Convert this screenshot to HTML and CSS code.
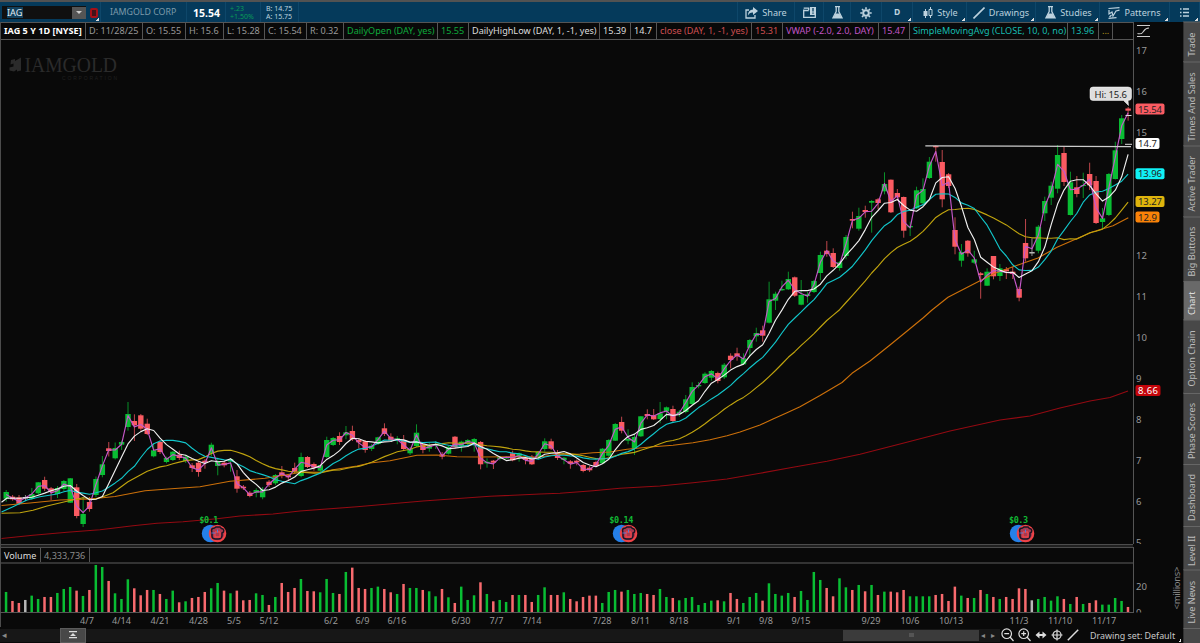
FILE: index.html
```html
<!DOCTYPE html>
<html lang="en">

<head>
    <meta charset="UTF-8">
    <meta name="viewport" content="width=device-width, initial-scale=1.0">
    <title>IAG chart</title>
    <link rel="stylesheet" href="styles.css">
</head>

<body>
    <header class="toolbar">
        <div class="symbol"><span class="ticker">IAG</span><span class="drop"></span></div>
        <div class="flag corner"><i></i></div>
        <div class="company">IAMGOLD CORP</div>
        <div class="last">15.54</div>
        <div class="pair up"><span>+.23</span><span>+1.50%</span></div>
        <div class="pair quote"><span>B: 14.75</span><span>A: 15.75</span></div>
        <div class="spacer"></div>
        <div class="tool share">
            <svg width="13" height="12" viewBox="0 0 13 12"><path d="M4 3H1v8h9V8" fill="none" stroke="currentColor" stroke-width="1.3"/><path d="M8 0l5 4-5 4V5.5C5.5 5.3 4 6.500 3 8.500 3 5 5 2.700 8 2.500z" fill="currentColor"/></svg>
            <span>Share</span>
        </div>
        <div class="tool cal">
            <svg width="13" height="11" viewBox="0 0 13 11"><path d="M.7 2.500V10.300h11.600V5M.7 3.500h5M.7 1.200h5v2" fill="none" stroke="currentColor" stroke-width="1.3"/><path d="M7 0h6v8H7z" fill="currentColor"/><path d="M10 1v3.500M10 5.500v1.300" stroke="#053a5b" stroke-width="1.300"/></svg>
        </div>
        <div class="tool flask"><svg width="11" height="13" viewBox="0 0 11 13"><use href="#flask"/></svg></div>
        <div class="tool gear">
            <svg width="12" height="12" viewBox="0 0 12 12"><circle cx="6" cy="6" r="2.800" fill="none" stroke="currentColor" stroke-width="2"/><path d="M6 .3v2M6 9.700v2M.3 6h2M9.700 6h2M2 2l1.400 1.400M8.600 8.600L10 10M2 10l1.400-1.400M8.600 3.400L10 2" stroke="currentColor" stroke-width="1.600"/></svg>
        </div>
        <div class="tool agg corner"><b>D</b></div>
        <div class="tool style corner">
            <svg width="10" height="12" viewBox="0 0 10 12"><path d="M2.500 2v9M7.500 0v2.500M7.500 8.500V11" stroke="currentColor"/><path d="M.5 4h4v5h-4z" fill="currentColor"/><path d="M6 2.500h3v6H6z" fill="none" stroke="currentColor"/></svg>
            <span>Style</span>
        </div>
        <div class="tool draw corner">
            <svg width="12" height="12" viewBox="0 0 12 12"><path d="M.5 11.500L11.500.5" stroke="currentColor" stroke-width="1.600"/></svg>
            <span>Drawings</span>
        </div>
        <div class="tool studies corner">
            <svg width="11" height="13" viewBox="0 0 11 13"><g id="flask"><path d="M3 .7h5M4.200 1v4.500L1 11.800h9L6.800 5.500V1" fill="none" stroke="currentColor" stroke-width="1.300"/><path d="M3.500 7.500h4l2.200 4.500H1.300z" fill="currentColor"/></g></svg>
            <span>Studies</span>
        </div>
        <div class="tool patterns corner">
            <svg width="12" height="12" viewBox="0 0 12 12"><path d="M.5 1.500L11.500.7M.5 11.300l8-.6M1 3v4l3-2 1 4 3-5 3.500-.8M1.500 10l2-2" fill="none" stroke="currentColor" stroke-width="1.200"/></svg>
            <span>Patterns</span>
        </div>
        <div class="tool list corner">
            <svg width="9" height="9" viewBox="0 0 9 9"><path d="M0 1h1.500M3 1h6M0 4.500h1.500M3 4.500h6M0 8h1.500M3 8h6" stroke="currentColor" stroke-width="1.300"/></svg>
        </div>
    </header>

    <main class="workspace">
        <section class="chart">
            <div class="legend" id="legend"></div>
            <svg class="plot" id="plot" viewBox="0 40 1133 504">
                <g class="logo">
                    <path d="M11 60l4-1v2l6-3.500v13l-4 1v-2l-3 2-4.500-1v-3l4-1v-3l-3 1z"/>
                    <text class="brand" x="24.500" y="71.500" textLength="92.500" lengthAdjust="spacingAndGlyphs">IAMGOLD</text>
                    <text class="sub" x="62" y="79.500" textLength="55">CORPORATION</text>
                </g>
            </svg>
            <div class="volume-head"><span>Volume</span><span class="amount">4,333,736</span></div>
            <svg class="volume" id="volume" viewBox="0 564 1133 49"></svg>
            <svg class="dates" id="dates" viewBox="0 613 1133 14"></svg>
        </section>
        <svg class="axis" id="axis" viewBox="1133 22 50 605">
            <path class="fit" d="M1137 25.500h13M1137 36.500h13M1137.500 33.500c8 2 4-5.500 11.500-5.500"/>
        </svg>
        <nav class="tabs">
            <span class="t1">Trade</span>
            <span class="t2">Times And Sales</span>
            <span class="t3">Active Trader</span>
            <span class="t4">Big Buttons</span>
            <span class="t5 active">Chart</span>
            <span class="t6">Option Chain</span>
            <span class="t7">Phase Scores</span>
            <span class="t8">Dashboard</span>
            <span class="t9">Level II</span>
            <span class="t10">Live News</span>
            <span class="t11"></span>
        </nav>
        <footer class="bottom">
            <div class="track">
                <span class="arrow">◂</span>
                <span class="expand"><svg width="8" height="8" viewBox="0 0 8 8"><path d="M0 0h8v1.300H0zM4 2l3 3H1zM0 6h8v1.300H0z" fill="#ddd"/></svg></span>
                <span class="thumb"><i></i></span>
                <span class="arrows"><b>◂</b><b>▸</b></span>
            </div>
            <div class="zoomers">
                <svg width="13" height="14" viewBox="0 0 13 14"><g id="lens"><circle cx="5.700" cy="5.700" r="4.800"/><path d="M9 9l3.500 4M3.300 5.700h4.800"/></g></svg>
                <svg width="13" height="14" viewBox="0 0 13 14"><use href="#lens"/><path d="M5.700 3.300v4.800"/></svg>
                <svg width="12" height="12" viewBox="0 0 12 12"><path d="M3 6h6" stroke-width="2"/><path d="M4.500 2.500v7L.5 6zM7.500 2.500v7l4-3.500z" fill="#ddd" stroke="none"/></svg>
                <svg width="12" height="12" viewBox="0 0 12 12"><circle cx="6" cy="6" r="4"/><path d="M6 .5v11M.5 6h11"/></svg>
                <svg width="12" height="12" viewBox="0 0 12 12"><path d="M.8 11.200L11.200.8" stroke-width="1.500"/></svg>
            </div>
            <div class="set corner">Drawing set: Default</div>
        </footer>
    </main>

    <script src="chart.js"></script>
</body>

</html>
```
FILE: styles.css
```css
* {
    box-sizing: border-box;
}

body {
    margin: 0;
    width: 1200px;
    height: 643px;
    overflow: hidden;
    background: #090909;
    color: #ccc;
    font: 9.100px/1 "Noto Sans", "Open Sans", sans-serif;
}

svg {
    display: block;
    flex: none;
}

/* toolbar */
.toolbar {
    display: flex;
    height: 22px;
    border-top: 2px solid #525252;
    background: #053a5b;
    color: #bdd2de;
    white-space: nowrap;
}

.toolbar > div {
    display: flex;
    align-items: center;
    flex: none;
    height: 20px;
    padding-top: 1px;
    border-right: 1px solid #0e476a;
}

.toolbar > .symbol {
    width: 84px;
    height: 13px;
    margin: 4px 0 0 2px;
    padding: 0;
    background: #101010;
    border: 0;
}

.ticker {
    width: 16px;
    margin-left: 5px;
    background: #12405c;
    color: #e4edf2;
    line-height: 11px;
}

.drop {
    display: flex;
    justify-content: center;
    align-items: center;
    width: 14px;
    height: 12px;
    margin-left: auto;
    background: #555;
}

.drop::after {
    content: "";
    border: 3.500px solid transparent;
    border-top-color: #ccc;
    border-bottom: 0;
}

.toolbar > .flag {
    width: 15px;
    padding-left: 4px;
}

.flag i {
    width: 8px;
    height: 10px;
    border: 2.500px solid #a51018;
    border-radius: 2px;
    background: #43121a;
}

.toolbar > .company {
    width: 86px;
    padding-left: 9px;
    color: #7e9aaa;
    font-size: 8.800px;
}

.toolbar > .last {
    width: 39px;
    padding-left: 6px;
    padding-top: 2px;
    color: #fff;
    font-size: 10.500px;
    font-weight: bold;
}

.toolbar > .pair {
    flex-direction: column;
    align-items: flex-start;
    justify-content: center;
    width: 35px;
    padding-left: 4px;
    font-size: 7px;
    line-height: 8px;
}

.toolbar > .up {
    color: #0a9c58;
}

.toolbar > .quote {
    width: 38px;
    padding-left: 5px;
}

.toolbar > .spacer {
    flex: 1;
}

.toolbar > .tool {
    justify-content: center;
    gap: 4px;
}

.toolbar > .share { width: 57px; }
.toolbar > .cal { width: 29px; }
.toolbar > .flask { width: 27px; }
.toolbar > .gear { width: 31px; }
.toolbar > .agg { width: 31px; }
.toolbar > .style { width: 54px; }
.toolbar > .draw { width: 69px; }
.toolbar > .studies { width: 64px; }
.toolbar > .patterns { width: 70px; }
.toolbar > .list { width: 30px; }

.toolbar > .style,
.toolbar > .studies {
    padding-left: 2px;
}

.agg b {
    font-size: 8.500px;
}

/* small white triangle that marks a drop-down */
.corner {
    background: linear-gradient(135deg, transparent 50%, #ddd 50%) right 1px bottom 1px / 3px 3px no-repeat;
}

/* workspace */
.workspace {
    display: grid;
    grid-template-columns: 1133px 50px 17px;
    grid-template-rows: 605px 16px;
    height: 621px;
}

.chart {
    border-left: 1px solid #4c4c4c;
    display: flex;
    flex-direction: column;
}

.legend {
    display: flex;
    height: 18px;
    border: 1px solid #555;
    border-width: 1px 0;
    white-space: nowrap;
}

.legend span {
    flex: none;
    padding-left: 3px;
    border-right: 1px solid #555;
    line-height: 15px;
}

.plot {
    width: 1133px;
    height: 504px;
    margin-left: -1px;
}

.volume-head {
    display: flex;
    height: 20px;
    border-top: 1px solid #4c4c4c;
    border-bottom: 2px solid #333;
    background: linear-gradient(#202020 2px, #4c4c4c 2px, #4c4c4c 3px, transparent 3px);
    padding-top: 3px;
}

.volume-head span {
    width: 40px;
    padding-left: 3px;
    border-right: 1px solid #555;
    line-height: 15px;
    color: #ddd;
}

.volume-head .amount {
    width: 49px;
    color: #8b8b8b;
}

.volume {
    width: 1133px;
    height: 49px;
    margin-left: -1px;
}

.logo path,
.logo text {
    fill: #2b2b2b;
}

.brand {
    font: 20px "Liberation Serif", serif;
}

.logo .sub {
    fill: #202020;
    font: 5px "Liberation Sans", sans-serif;
}

.line {
    fill: none;
    stroke-width: 1.150;
    stroke-linejoin: round;
}

.g { fill: #09bd33; stroke: #09bd33; }
.r { fill: #fb5b62; stroke: #fb5b62; }
.w { fill: #b8b8b8; stroke: #b8b8b8; }

.wick {
    stroke-width: 1;
    opacity: .75;
}

.body,
.bar {
    stroke: none;
}

.bar.r {
    fill: #f86a6e;
}

.dividend {
    fill: #11b834;
    font: bold 8.500px "DejaVu Sans Mono", monospace;
}

.bubble {
    fill: #dedede;
    stroke: #fff;
    stroke-width: .5;
}

.hi {
    fill: #222;
    font-size: 9.500px;
}

/* axis */
.axis {
    width: 50px;
    height: 605px;
    font-size: 9.500px;
    fill: #999;
}

.fit {
    fill: none;
    stroke: #ccc;
    stroke-width: 1.200;
}

.frame {
    fill: none;
    stroke: #555;
}

.dates {
    width: 1133px;
    height: 14px;
    margin-left: -1px;
    font-size: 9.100px;
    fill: #999;
    text-anchor: middle;
}

.millions {
    fill: #888;
    text-anchor: middle;
}

/* side tabs */
.tabs {
    grid-column: 3;
    grid-row: 1 / 3;
    background: #484848;
}

.tabs span {
    display: flex;
    align-items: center;
    justify-content: center;
    width: 17px;
    padding-top: 0;
    writing-mode: vertical-rl;
    transform: rotate(180deg);
    border-bottom: 1px solid #666;
    border-right: 1px solid #303030;
    color: #bbb;
    white-space: nowrap;
}

/* the tabs are turned upside down, so this moves each label down */
.tabs span:not(:empty) {
    padding-bottom: 4px;
}

.t1 { height: 39.500px; }
.t2 { height: 84.500px; }
.t3 { height: 70.500px; }
.t4 { height: 64.500px; }
.t5 { height: 39px; }
.t6 { height: 72.500px; }
.t7 { height: 71px; }
.t8 { height: 62px; }
.t9 { height: 44px; }
.t10 { height: 58.500px; }
.t11 { height: 15px; }

.tabs .active {
    background: #696969;
    color: #ddd;
}

/* bottom bar */
.bottom {
    grid-column: 1 / 3;
    grid-row: 2;
    display: flex;
    align-items: center;
}

.track {
    display: flex;
    align-items: center;
    width: 1000px;
    height: 13px;
    background: #171717;
    color: #888;
    font: 9px "DejaVu Sans", sans-serif;
}

.arrow {
    width: 60px;
    padding-left: 2px;
}

.expand {
    display: flex;
    align-items: center;
    justify-content: center;
    width: 26px;
    height: 15px;
    background: #484848;
    border: 1px solid #5b5b5b;
}

.thumb {
    display: flex;
    align-items: center;
    justify-content: center;
    width: 136px;
    height: 11px;
    margin-left: 757px;
    background: #3b3b3b;
}

.thumb i {
    width: 5px;
    height: 4px;
    background: #555;
}

.arrows {
    display: flex;
    gap: 6px;
    padding-left: 2px;
    font-size: 8px;
}

.zoomers {
    display: flex;
    align-items: center;
    gap: 4px;
    width: 90px;
    padding-left: 1px;
    fill: none;
    stroke: #ddd;
    stroke-width: 1.200;
}

.set {
    width: 92px;
    font-size: 8.900px;
    line-height: 15px;
    white-space: nowrap;
    color: #c8c8c8;
}
```
FILE: chart.js
```js
// colour, high, body top, body bottom, low, volume
const rows = `
g 490 492 498.7 501.7 61|r 495 496.7 499.3 500.7 34|r 495 497.3 503.7 505 28|w 495 497 498.5 501 37
g 488 494 498.7 500 50|g 482 482.3 493.3 495 40|r 476.7 480 488.7 491 46|r 487 488.3 491.7 500 46
g 486 488 494 498 58|g 480 481 489 491 70|g 478 478.3 502.7 503 76|r 484 487.3 516 518.3 65
g 497 514 524 527 49|r 497 502 509 511.7 67|g 476.5 479 495 497 142|g 456 464.3 475 477.3 136
r 442 448.3 451 456.5 94|g 442.5 448 458.3 459.5 57|g 440.7 442 444.7 450 40|g 402 414 427 430.7 99
r 414.3 421 425.3 441 72|r 414 415.3 428.7 430.7 51|r 418.7 423.7 434 435 67|g 443.3 450.3 456.3 457.3 67
r 440.7 442 452 454 55|g 456.7 458 462 463.3 40|g 451 451.7 460 461 65|r 450.7 454.7 458 460 30
g 454.7 456.7 461 463 33|r 463 465.3 468 472 43|r 461 462.7 472 476.7 46|r 459 460.7 462.7 468.7 61
g 442.7 444.7 453.7 456 72|g 457.7 461.7 466 475.3 88|r 461 462.7 465.3 467.3 65|g 458 459 461.5 471.7 57
r 470 476.3 488.7 492.7 65|r 485 486.7 488.3 490 36|r 491 492.7 496 497.3 37|g 488.3 490 492.7 497.3 57
g 487 489.3 497.3 499.3 52|r 480 481.7 485 487 22|g 474 475 483.3 485 46|r 466 472.3 476 478.3 88
r 474 475.3 477.3 480 61|r 462.7 468 471.7 473.3 73|g 452.7 457 476 477.3 100|r 456 457 467 468 64
r 462.5 464 467.7 470.7 63|g 465 465.3 470.7 472 60|g 436.7 440 457 458.3 100|g 437 438 445 446 58
r 432.3 436 442 445 55|g 426 432.3 435.3 439.3 121|r 425.7 431 439.3 441 134|r 438 440 442.3 448.3 73
r 440 441.3 450 452.7 70|g 444 445.7 449 451 73|g 436.7 437.3 444 445 77|r 423.3 428.3 434 436 70
r 433.3 436.7 440.7 442 60|g 436 438.3 440.7 444.3 55|r 435 440 449 451 85|g 447 448.7 453.3 455 73
g 424.3 432.7 446 447 73|r 443 444.3 450 453.3 67|g 443 446 448.7 451.7 63|g 441 444 446 449 48
r 452 454.3 456.7 459.3 70|g 446 446.7 453.7 454.5 45|r 436 436.7 447.3 448.3 28|g 440.7 441.7 446 451.7 77
g 439 440 444 445.5 37|g 438 439 443 451.7 51|r 441 442 464.3 469.3 90|g 458.3 461.7 463.3 467.7 55
r 460 460.7 462.7 469 33|g 456 457.3 459 460.5 37|g 456 457 458.5 459 31|r 450.7 453.3 460.3 461.3 52
g 452.5 453.3 456.7 461.7 52|r 457 458 460 464.3 52|r 455 456.7 464.3 465 31|g 451 452 457.3 459 52
g 438.3 441.3 449 451.7 75|r 438.7 441.3 448.7 450 52|r 450 452.7 458 460 52|g 457 457.7 460 464.3 60
r 460 461.3 463.7 468.7 40|r 459.5 460.7 462.3 465.3 33|r 464 465 471 472.3 46|r 466 467.7 470.3 472 50
r 460.7 462 466 467 50|g 448 448.7 463.3 464 28|g 439 440 455.7 457 61|g 423 424 440.7 441 67
r 416.7 422 430.7 433.3 62|g 429.3 439 440.7 444.3 67|g 434 437 448.7 455 55|g 416 416.3 436.3 437 58
r 409.3 414 416 419.3 55|r 409 415.3 419.3 420 52|g 402 413.3 419 423.3 70|g 406.5 407.3 411.3 419.3 46
r 405.7 409 421 422.7 43|g 410 411.7 414 416.7 36|g 395 399.3 412 413.3 43|g 382.3 387 404 405 46
g 382 385 386.3 388.3 22|g 372.3 373.7 383 384 28|g 370 371 377.7 380.7 35|r 371.7 373 381 383.3 36
g 363 364.7 377.3 379 33|r 353.3 355.7 360 368.3 58|r 347.7 353.3 356.3 360.7 40|g 353.3 358.3 364.3 365 28
g 339 340 348 356 46|g 327.7 333 336.3 341.7 58|r 325.7 330.3 335.7 341.7 35|g 281.7 299.3 322.7 323.5 87
g 291.7 293.7 300.7 310 55|g 280.7 289 290.3 291 50|g 271.7 279 289.3 290 58|r 276.5 277.3 295.7 297 46
g 280 295 304.7 305.3 64|g 292 294.3 296 302.7 37|g 280 281 292 293 121|g 251.7 255 273 280 97
r 241 250.7 254 256.7 73|r 248.3 253 267 268 48|g 261 262.3 268 270.7 102|g 235 237 256 259.3 75
r 211.7 219 220.7 228.3 67|g 207.7 216 228.7 230.7 82|r 205.7 210 212 217.7 63|g 200 201 202.7 232.7 82
r 198 199.3 203 209 52|g 172.3 184 191.3 194.3 62|r 179.5 179.7 212.3 213 62|r 189 193 197.3 200.7 60
r 196.5 197 230.7 237.7 67|g 221.7 226 227.3 236 48|g 186.7 190.3 208.3 209 48|g 178.3 189 203.3 204 48
g 157 161.7 178 179 48|r 145.5 146 147.3 161.7 52|r 150 162 199.3 207.3 55|r 173 174.3 186 188 34
r 217.3 230 246.7 254.3 77|g 244 252 260.7 266.7 50|r 240 240.7 253.3 256.7 43|g 250.7 259.3 262.7 264 43
r 272 273.3 275 298.7 67|g 268.3 271.7 285.7 286 55|r 256 256 276.3 279.3 46|g 264 268.3 276 281 40
r 267 269.3 271.3 279 46|r 266.7 271.7 274 279 40|r 286.7 289 297.7 301.3 72|r 219 243 258.3 261.7 70
w 238.3 252 253.5 256 36|g 225 226.7 250.7 253.3 40|g 196.7 201 213.3 221 46|g 181.7 185.7 197.7 205 35
g 145 155 188.7 193.3 48|r 146 153 182 186 40|g 171.7 182.3 215 215.5 25|r 176 187.3 194 197.3 46
g 172.7 185 186 198 25|r 162.7 174 185.3 190 28|r 176 181 223 224 36|g 208 218.3 222 229 23
g 173 174 215 216 23|g 141.7 150.3 179 179.5 43|g 115 118.3 139 144 34|r 107 108.5 110.7 120.7 16`

const candles = rows.trim().split(/[|\n]/).map((row, i) => {
    const [color, ...n] = row.split(' ')
    const [high, top, bottom, low, vol] = n.map(Number)
    return { x: 6.2 + i * 6.411, color, high, top, bottom, low, vol, close: color === 'r' ? bottom : top }
})

const add = (id, markup) => document.getElementById(id).insertAdjacentHTML('beforeend', markup)
const line = (points, color) => `<polyline class="line" points="${points}" stroke="${color}"/>`

// simple moving average, drawn after its lead-in points
const average = (size, lead) => lead + ' ' + candles.slice(size - 1).map((c, i) => {
    const sum = candles.slice(i, i + size).reduce((total, k) => total + k.close, 0)
    return c.x.toFixed(1) + ',' + (sum / size).toFixed(1)
}).join(' ')

const vwap = candles.map(c => c.x.toFixed(1) + ',' + ((c.high + c.low + c.close) / 3).toFixed(1)).join(' ')

const orange = '1.5,505.500 30,503 60,500 90,499 115,496.500 145,490.700 175,488.500 200,486.700 230,481.300 265,478.300 285,475 303,472 320,472.300 333,469.700 357,466 370,463 390,460.700 417,455.300 437,455 457,456.700 480,457 523,456.700 537,457.300 557,454.500 580,454 593,452.700 610,452 627,449.300 650,447 673,445.300 693,442.700 710,439.700 727,435.700 740,432 760,425 773,419 787,412.700 800,406.700 820,395.500 842,382.500 852,373.300 870,361 890,345 905,332.700 923,318 932,310 948,297.300 980,280.700 995,273.300 1018,265 1038,258 1057,247.300 1080,237.300 1093,231.700 1113,225.700 1128.3,217.700'
const red = '1.5,538.500 33,535.300 67,532.300 100,529.700 133,525.700 157,523.300 183,521.700 217,518.700 240,516 273,514 300,511 357,506.700 423,501 490,496.300 540,494 560,493.300 593,490.700 620,488.300 660,486 693,482.700 727,479 760,473.300 793,467.300 827,461.300 860,454.300 900,444 950,431 1000,420 1030,416 1060,408 1090,401 1110,397.500 1128,391'

add('plot', candles.map(c =>
    `<path class="wick ${c.color}" d="M${c.x} ${c.high}V${c.low}"/>` +
    `<rect class="body ${c.color}" x="${c.x - 2.700}" y="${c.top}" width="5.400" height="${c.bottom - c.top}"/>`
).join('') +
    line(red, '#930a12') +
    line(orange, '#cc700a') +
    line(average(20, '1.5,513.300 20,512.700 33,510.300 47,506 67,501.300 83,497.700 95,499 103,496.700 113,492.700'), '#c0a40e') +
    line(average(10, '1.5,512 13,506.700 27,500 40,496.700 57,494'), '#12c6ca') +
    line(vwap, '#c558c9') +
    line(average(5, '1.5,502.300 7,498 20,498.300'), '#f0f0f0') +
    `<path d="M925.300 145.800L1131 146.700" stroke="#ccc" stroke-width="1.300"/>
    <path d="M1125 144.300h7M1125.500 115.500h6" stroke="#ddd"/>
    <path class="bubble" d="M1093 87h35q3.500 0 3.500 3v7.500q0 3-3.500 3l.5 5-5-5H1093q-3 0-3-3V90q0-3 3-3z"/>
    <text class="hi" x="1094.500" y="97.500" textLength="32.500">Hi: 15.6</text>`)

// dividend and earnings markers
for (const [x, label, width, c] of [[208.8, '$0.1', 19, 214], [621.3, '$0.14', 24, 625], [1018.5, '$0.3', 19, 1022]]) {
    add('plot', `<text class="dividend" x="${x - width / 2}" y="523" textLength="${width}">${label}</text>
    <circle cx="${c - 3.500}" cy="533.500" r="8.700" fill="#2580e8"/>
    <circle cx="${c + 3.500}" cy="533.500" r="7.800" fill="#a83a50" stroke="#f04347" stroke-width="2"/>
    <path d="M${c - 2.500} 530.500q0-2.500 3-2.500l1.500-1h4l1.500 1.500q3 .5 2 3.500l-1.500 1v3q-.5 3-3.500 3h-3q-3.500 0-3.500-3v-3z" fill="none" stroke="#1a1525" stroke-width="1.500"/>
    <path d="M${c + 1} 532h5M${c + 1} 532v5h5v-5" fill="none" stroke="#ed4449" stroke-width="1.300"/>
    <path d="M${c - 2.500} 533h4M${c + 3.500} 529.500v3" stroke="#5b78d0"/>`)
}

add('volume', candles.map(c =>
    `<rect class="bar ${c.color}" x="${c.x - 1.400}" y="${612.3 - c.vol / 3}" width="2.500" height="${c.vol / 3}"/>`
).join('') + '<path class="frame" d="M0 612.500h1133"/>')

const dates = { '4/7': 87, '4/14': 121.5, '4/21': 160, '4/28': 198.5, '5/5': 234, '5/12': 269, '6/2': 331, '6/9': 362.5, '6/16': 397, '6/30': 461, '7/7': 496.5, '7/14': 532, '7/28': 602, '8/11': 640.5, '8/18': 679, '9/1': 734, '9/8': 766, '9/15': 801, '9/29': 871, '10/6': 910, '10/13': 951, '11/3': 1019, '11/10': 1060, '11/17': 1104 }
add('dates', Object.entries(dates).map(([d, x]) => `<text x="${x}" y="623.500">${d}</text>`).join(''))

// price axis
const prices = { 17: 50, 16: 91, 15: 132.5, 12: 255, 11: 296, 10: 337, 9: 378, 8: 419.5, 7: 460.5, 6: 501.5 }
const tags = [
    ['15.54', 109, '#fb5b62', 29], ['14.7', 143.500, '#fff', 24], ['13.96', 173.700, '#10f1f5', 29],
    ['13.27', 201.500, '#dfb40c', 29], ['12.9', 217, '#fa8208', 24], ['8.66', 390.500, '#c4050b', 25]
]
add('axis', '<path class="frame" d="M1133.500 22v522M1133.500 547v66"/>' +
    Object.entries(prices).map(([p, y]) => `<text x="1136" y="${y + 3.5}">${p}</text>`).join('') +
    `<svg x="1134" y="530" width="20" height="14"><text x="2" y="16">5</text></svg>
    <svg x="1134" y="600" width="20" height="12.500"><text x="2" y="15.500">0</text></svg>
    <text x="1136" y="590">20</text>
    <text class="millions" transform="translate(1179.500 588) rotate(-90)" textLength="43">&lt;millions&gt;</text>` +
    tags.map(([p, y, color, w]) =>
        `<rect x="1135.500" y="${y - 5.500}" width="${w}" height="11" rx="2" fill="${color}"/>
        <text x="1138" y="${y + 3.500}" textLength="${w - 5}" fill="${p === '8.66' ? '#fff' : '#222'}">${p}</text>`
    ).join(''))

// study values: text, width, colour
const legend = [
    ['IAG 5 Y 1D [NYSE]', 85, '#fff'], ['D: 11/28/25', 57, '#999'], ['O: 15.55', 43, '#999'], ['H: 15.6', 38, '#999'],
    ['L: 15.28', 41, '#999'], ['C: 15.54', 42, '#999'], ['R: 0.32', 37, '#999'],
    ['DailyOpen (DAY, yes)', 94, '#0eaa3c'], ['15.55', 31, '#0eaa3c'],
    ['DailyHighLow (DAY, 1, -1, yes)', 131, '#ddd'], ['15.39', 31, '#ddd'], ['14.7', 26, '#ddd'],
    ['close (DAY, 1, -1, yes)', 95, '#cf4f52'], ['15.31', 31, '#cf4f52'],
    ['VWAP (-2.0, 2.0, DAY)', 96, '#c055c6'], ['15.47', 31, '#c055c6'],
    ['SimpleMovingAvg (CLOSE, 10, 0, no)', 158, '#16bcb0'], ['13.96', 31, '#16bcb0'], ['...', 14, '#b99a1c']
]
add('legend', legend.map(([text, w, color], i) =>
    `<span style="width:${w}px;color:${color};${i ? '' : 'font-weight:bold'}">${text}</span>`).join(''))
```
